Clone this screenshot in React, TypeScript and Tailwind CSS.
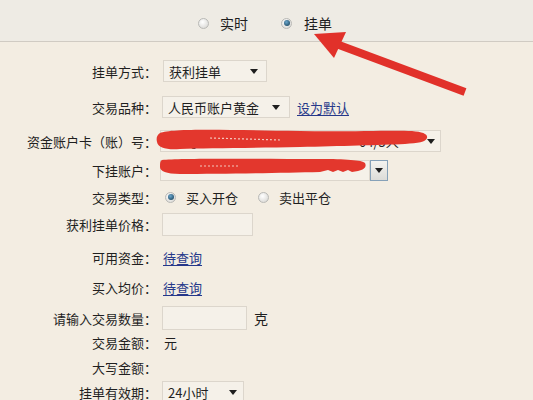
import React from "react";

function Radio({ checked }: { checked?: boolean }) {
  return (
    <div className="relative w-[11px] h-[11px] rounded-full border border-[#b9b9b6] bg-[radial-gradient(circle_at_40%_35%,#ffffff,#d3d2ce)] flex items-center justify-center shrink-0">
      {checked && (
        <div className="w-[6px] h-[6px] rounded-full bg-[radial-gradient(circle_at_40%_35%,#6aa6cc,#10384f)]" />
      )}
    </div>
  );
}

function Caret() {
  return (
    <svg width="8" height="5" viewBox="0 0 8 5" className="shrink-0">
      <polygon points="0,0 8,0 4,5" fill="#1e1e1e" />
    </svg>
  );
}

function Row({
  label,
  mt,
  children,
}: {
  label: string;
  mt: string;
  children?: React.ReactNode;
}) {
  return (
    <div className={`flex items-center h-[24px] ${mt}`}>
      <div className="w-[157px] shrink-0 text-right whitespace-nowrap">{label}</div>
      <div className="flex items-center h-full">{children}</div>
    </div>
  );
}

export default function App() {
  return (
    <div className="relative w-[533px] h-[400px] overflow-hidden bg-[#f3ede2] font-['Noto_Sans_CJK_SC',sans-serif] text-[13px] leading-none text-[#1f1f1f]">
      {/* top band */}
      <div className="h-[42px] bg-[#eeebe4] border-b border-[#d0cbc3] flex items-center pt-[5px] pl-[198px] text-[14px]">
        <Radio />
        <span className="ml-[11px]">实时</span>
        <div className="ml-[33px]">
          <Radio checked />
        </div>
        <span className="ml-[12px]">挂单</span>
      </div>

      <Row label="挂单方式：" mt="mt-[17px]">
        <div className="ml-[6px] w-[104px] h-[22px] border border-[#dcd6cc] bg-[#f5f1e9] flex items-center justify-between pl-[5px] pr-[8px]">
          <span>获利挂单</span>
          <Caret />
        </div>
      </Row>

      <Row label="交易品种：" mt="mt-[12px]">
        <div className="ml-[5px] w-[128px] h-[22px] border border-[#dcd6cc] bg-[#f5f1e9] flex items-center justify-between pl-[5px] pr-[9px]">
          <span>人民币账户黄金</span>
          <Caret />
        </div>
        <span className="ml-[7px] text-[#26388a] underline underline-offset-2">设为默认</span>
      </Row>

      <Row label="资金账户卡（账）号：" mt="mt-[10px]">
        <div className="ml-[3px] w-[281px] h-[22px] border border-[#dcd6cc] bg-[#f5f1e9] flex items-center pl-[12px] pr-[5px]">
          <span className="whitespace-nowrap">卡号</span>
          <span className="ml-[160px] whitespace-nowrap">04/5人</span>
          <span className="ml-auto">
            <Caret />
          </span>
        </div>
      </Row>

      <Row label="下挂账户：" mt="mt-[5px]">
        <div className="ml-[3px] flex items-center">
          <div className="w-[210px] h-[21px] border border-[#dcd6cc] bg-[#f5f1e9]" />
          <div className="w-[18px] h-[21px] border border-[#86a1b8] bg-[linear-gradient(#f4f3ef,#dcdcd8)] flex items-center justify-center">
            <Caret />
          </div>
        </div>
      </Row>

      <Row label="交易类型：" mt="mt-[3px]">
        <div className="ml-[8px]">
          <Radio checked />
        </div>
        <span className="ml-[10px]">买入开仓</span>
        <div className="ml-[20px]">
          <Radio />
        </div>
        <span className="ml-[10px]">卖出平仓</span>
      </Row>

      <Row label="获利挂单价格：" mt="mt-[3px]">
        <div className="ml-[5px] w-[91px] h-[23px] border border-[#dcd6cc] bg-[#f5f1e9]" />
      </Row>

      <Row label="可用资金：" mt="mt-[9px]">
        <span className="ml-[6px] text-[#26388a] underline underline-offset-2">待查询</span>
      </Row>

      <Row label="买入均价：" mt="mt-[6px]">
        <span className="ml-[6px] text-[#26388a] underline underline-offset-2">待查询</span>
      </Row>

      <Row label="请输入交易数量：" mt="mt-[7px]">
        <div className="ml-[5px] w-[85px] h-[24px] border border-[#dcd6cc] bg-[#f5f1e9]" />
        <span className="ml-[7px] text-[14px]">克</span>
      </Row>

      <Row label="交易金额：" mt="mt-0">
        <span className="ml-[7px]">元</span>
      </Row>

      <Row label="大写金额：" mt="mt-[1px]" />

      <Row label="挂单有效期：" mt="mt-[1px]">
        <div className="ml-[5px] w-[82px] h-[22px] border border-[#dcd6cc] bg-[#f5f1e9] flex items-center justify-between pl-[5px] pr-[6px]">
          <span>24小时</span>
          <Caret />
        </div>
      </Row>

      {/* red annotations drawn over the screenshot */}
      <svg
        className="absolute inset-0 pointer-events-none"
        width="533"
        height="400"
        viewBox="0 0 533 400"
      >
        {/* scribble over card number */}
        <path
          d="M160,133 C172,128 230,130 300,131 C345,132 390,130 412,131 C423,132 428,134 427,138 C426,142 418,143 405,144 C380,145 340,146 300,147 C250,148 205,148 180,149 C167,150 158,148 157,142 C156,138 157,135 160,133 Z"
          fill="#e3372d"
        />
        {/* scribble over sub account */}
        <path
          d="M162,160 C180,158 260,159 320,159 C345,159 362,160 365,163 C367,167 364,170 358,171 L352,172 L348,170 L343,172 L338,170 L333,172 L328,170 L320,172 C280,173 220,174 180,174 C166,174 160,171 160,167 C160,163 160,161 162,160 Z"
          fill="#e3372d"
        />
        <line x1="210" y1="138" x2="280" y2="140" stroke="#f4c7bd" strokeWidth="1.2" strokeDasharray="2 2" />
        <line x1="200" y1="166" x2="240" y2="166" stroke="#f4c7bd" strokeWidth="1.2" strokeDasharray="2 2" />
        {/* arrow */}
        <polygon
          points="466.4,88.3 463.6,95.7 337.6,48.7 340.4,41.3"
          fill="#e1312a"
        />
        <polygon points="314,34 346,32 334,58" fill="#e1312a" />
      </svg>
    </div>
  );
}
